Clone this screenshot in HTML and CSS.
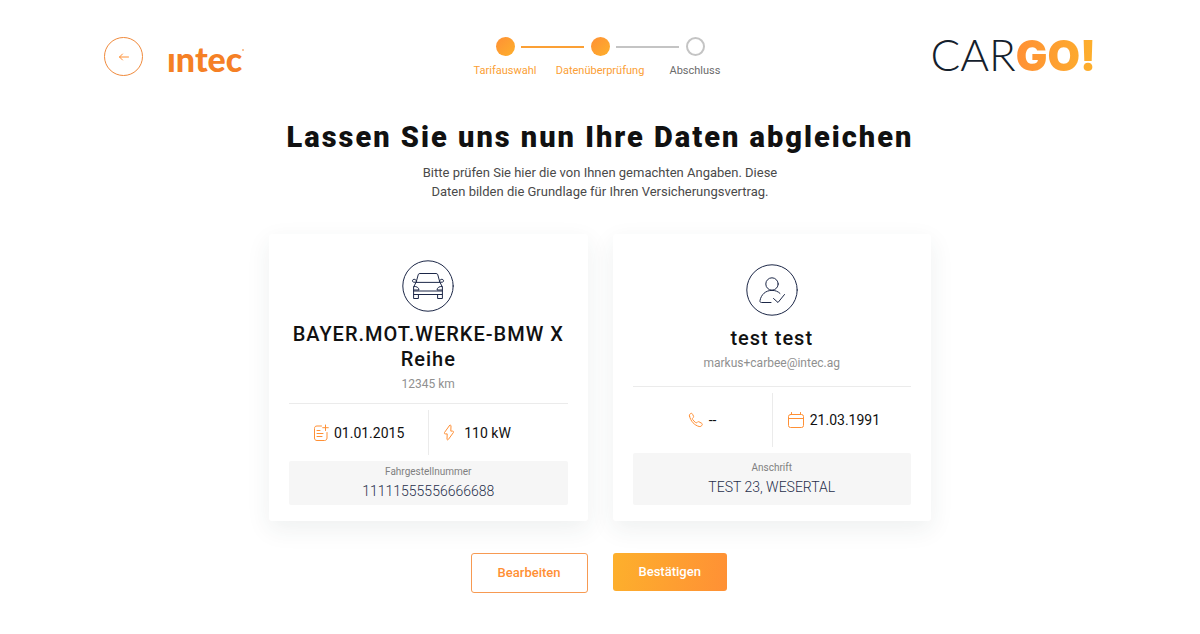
FILE: index.html
```
<!DOCTYPE html>
<html lang="de">
<head>
  <meta charset="UTF-8">
  <meta name="viewport" content="width=device-width, initial-scale=1">
  <title>CarGo! - Datenüberprüfung</title>
  <link rel="stylesheet" href="styles.css">
</head>
<body>

  <header class="header">
    <div class="header-left">
      <button type="button" class="back" aria-label="Zurück">
        <svg width="12" height="10" viewBox="0 0 12 10"><path d="M10.500 5H1.500M4.500 2L1.500 5l3 3"/></svg>
      </button>
      <a href="#" class="intec" aria-label="intec">ıntec<span class="intec-mark"></span></a>
    </div>

    <ol class="steps">
      <li class="step done">Tarifauswahl</li>
      <li class="step active">Datenüberprüfung</li>
      <li class="step">Abschluss</li>
    </ol>

    <a href="#" class="cargo">CAR<b>GO!</b></a>
  </header>

  <main class="content">
    <h1>Lassen Sie uns nun Ihre Daten abgleichen</h1>
    <p class="intro">Bitte prüfen Sie hier die von Ihnen gemachten Angaben. Diese Daten bilden die Grundlage für Ihren Versicherungsvertrag.</p>

    <div class="cards">
      <section class="card">
        <div class="summary">
          <svg class="badge" viewBox="0 0 52 52">
            <circle cx="26" cy="26" r="25.2"/>
            <path d="M14.200 22l2-7.200c.2-.9.8-1.300 1.700-1.300h16.200c.9 0 1.500.4 1.700 1.300l2 7.200z"/>
            <path d="M13.800 22.200h-2c-1.800 0-1.800-2.900.3-2.900 1.300 0 2.100.7 2.400 1.900M38.200 22.200h2c1.800 0 1.800-2.900-.3-2.900-1.300 0-2.100.7-2.400 1.900"/>
            <path d="M14.200 22L11.600 27v7.500h28.800V27L37.800 22M11.600 31h28.800"/>
            <path d="M12 26.500c2.800-.2 4.700.9 5 3.500h-5M40 26.500c-2.800-.2-4.700.9-5 3.500h5"/>
            <path d="M11.600 34.500v4h4.800v-4M35.600 34.500v4h4.800v-4"/>
          </svg>
          <h2>BAYER.MOT.WERKE-BMW X Reihe</h2>
          <p class="sub">12345 km</p>
        </div>
        <div class="details">
          <div class="detail">
            <svg width="16" height="18" viewBox="0 0 16 18">
              <path d="M8.500 2H4C2.200 2 1.500 3 1.500 4.500v9.500c0 1.500.8 2.500 2.500 2.500h7.500c1.500 0 2.500-1 2.500-2.500V8.500"/>
              <path d="M12.500 1v5.500M9.700 3.700h5.600M4 6.500h3M4 9.500h6M4 12.500h5"/>
            </svg>
            <span>01.01.2015</span>
          </div>
          <div class="detail wide">
            <svg width="12" height="18" viewBox="0 0 12 18">
              <path d="M6.500 1.500L1.500 8.500c-.4.8 0 1.400.8 1.400h1.900L4 15c0 1 .8 1.200 1.400.4l5-6.900c.4-.8 0-1.400-.8-1.400H7.800L8 2c0-1-.9-1.200-1.500-.5z"/>
            </svg>
            <span>110 kW</span>
          </div>
        </div>
        <dl class="box">
          <dt>Fahrgestellnummer</dt>
          <dd>11111555556666688</dd>
        </dl>
      </section>

      <section class="card">
        <div class="summary">
          <svg class="badge" viewBox="0 0 52 52">
            <circle cx="26" cy="26" r="25.2"/>
            <circle cx="26" cy="20" r="6.200"/>
            <path d="M25 38.500H15.500c-1.300 0-1.800-.8-1.500-2C15.300 30.500 19.500 26.400 26 26.400c3.300 0 6 1 8 3"/>
            <path d="M27.500 34.500l4.500 4 6.500-8"/>
          </svg>
          <h2>test test</h2>
          <p class="sub">markus+carbee@intec.ag</p>
        </div>
        <div class="details">
          <div class="detail">
            <svg width="16" height="16" viewBox="0 0 16 16">
              <path d="M1.500 4.200C1 2.500 2.300 1.400 3.400 1.300c.6 0 1 .6 1.300 1.200l.8 1.700c.3.800-.1 1.400-.8 1.900-.5.400-.4.900 0 1.500.8 1.200 1.700 2.100 2.900 2.900.6.400 1.100.4 1.500-.1.500-.6 1.100-1 1.900-.6l2.500 1.400c.8.400 1 .9.700 1.600-.6 1.400-1.700 2-3.100 1.700C6.500 13.200 2.800 9.500 1.500 4.200z"/>
            </svg>
            <span>--</span>
          </div>
          <div class="detail">
            <svg width="18" height="18" viewBox="0 0 18 18">
              <rect x="1.500" y="3.500" width="15" height="13" rx="2"/>
              <path d="M1.500 7.500h15M4.500 1.500v2M13.500 1.500v2"/>
            </svg>
            <span>21.03.1991</span>
          </div>
        </div>
        <dl class="box">
          <dt>Anschrift</dt>
          <dd>TEST 23, WESERTAL</dd>
        </dl>
      </section>
    </div>

    <div class="actions">
      <button type="button" class="btn btn-outline">Bearbeiten</button>
      <button type="button" class="btn btn-primary">Bestätigen</button>
    </div>
  </main>

</body>
</html>
```
FILE: styles.css
```
*, *::before, *::after { box-sizing: border-box; }
body { margin: 0; background: #fff; color: #111; font-family: Roboto, "Liberation Sans", sans-serif; }
h1, h2, p, dl, dd, ol { margin: 0; padding: 0; }
a { text-decoration: none; }
button { font-family: inherit; cursor: pointer; }
svg { fill: none; stroke: #ff9035; stroke-width: 1; stroke-linecap: round; stroke-linejoin: round; flex: none; }

/* header */
.header { display: grid; grid-template-columns: 1fr 285px 1fr; align-items: start; max-width: 1040px; margin: 0 auto; padding: 37px 24px 0; }
.header-left { display: flex; align-items: center; gap: 24px; }
.back { display: flex; align-items: center; justify-content: center; width: 39px; height: 39px; padding: 0; border: 1px solid #f08a3c; border-radius: 50%; background: none; }
.intec { position: relative; padding-top: 4px; color: #f58025; font: 900 34px/35px Lato, sans-serif; }
.intec-mark { position: absolute; top: 12px; right: -2px; width: 2px; height: 2px; border-radius: 50%; background: #f9b27c; }
.cargo { justify-self: end; color: #14202c; font: 300 44px/34px Lato, sans-serif; }
.cargo b { font: 900 42px/34px Inter, sans-serif; background: linear-gradient(90deg, #ff9035, #fdb02c); background-clip: text; -webkit-background-clip: text; color: transparent; }

.steps { display: grid; grid-template-columns: repeat(3, 1fr); list-style: none; }
.step { position: relative; display: flex; flex-direction: column; align-items: center; gap: 8px; color: #6b6b6b; font-size: 11px; line-height: 14px; white-space: nowrap; }
.step::before { content: ""; width: 19px; height: 19px; border: 2px solid #c4c4c4; border-radius: 50%; }
.step:not(:last-child)::after { content: ""; position: absolute; top: 9px; left: calc(50% + 16px); width: calc(100% - 32px); height: 2px; background: #c4c4c4; }
.done, .active { color: #fba035; }
.step.done::before, .step.active::before { border: 0; background: linear-gradient(135deg, #ff9035, #fdb02c); }
.step.done::after { background: #fba035; }

/* content */
.content { max-width: 710px; margin: 0 auto; padding: 41px 24px 40px; text-align: center; }
h1 { font-size: 29px; line-height: 36px; font-weight: 900; letter-spacing: 2px; }
.intro { max-width: 370px; margin: 8px auto 0; color: #4a4a4a; font-size: 13px; line-height: 19px; }

.cards { display: grid; grid-template-columns: 1fr 1fr; gap: 25px; margin-top: 33px; }
.card { display: flex; flex-direction: column; padding: 0 20px 16px; border-radius: 3px; background: #fff; box-shadow: 0 8px 24px rgba(40, 60, 60, 0.08); }
.summary { flex: 1 1 auto; display: flex; flex-direction: column; align-items: center; justify-content: center; padding: 26px 0 11px; border-bottom: 1px solid #ebebeb; }
.badge { width: 52px; height: 52px; stroke: #1c2747; }
h2 { margin-top: 10px; font-size: 20px; line-height: 25px; font-weight: 500; letter-spacing: 1px; }
.sub { margin-top: 4px; color: #909090; font-size: 12px; line-height: 16px; }

.details { flex: 1 1 auto; display: grid; grid-template-columns: 1fr 1fr; padding: 6px 0; }
.detail { display: flex; align-items: center; justify-content: center; gap: 5px; min-height: 45px; font-size: 14px; line-height: 18px; }
.detail + .detail { justify-content: flex-start; padding-left: 14px; border-left: 1px solid #ebebeb; }
.wide { gap: 9px; }

.box { flex: 1 1 auto; display: flex; flex-direction: column; justify-content: center; gap: 3px; padding: 4px 0 5px; border-radius: 2px; background: #f6f6f6; }
.box dt { color: #808080; font-size: 10px; line-height: 14px; }
.box dd { color: #28304c; font-size: 14px; line-height: 18px; font-weight: 300; }

.actions { display: grid; grid-template-columns: 1fr 1fr; gap: 25px; align-items: start; margin-top: 32px; }
.btn { padding: 0 26px; border: 0; border-radius: 3px; font-size: 13px; line-height: 38px; font-weight: 500; }
.btn-outline { justify-self: end; border: 1px solid #f79a52; background: #fff; color: #ff9035; }
.btn-primary { justify-self: start; background: linear-gradient(100deg, #fdb02c, #ff9035); color: #fff; }
```
